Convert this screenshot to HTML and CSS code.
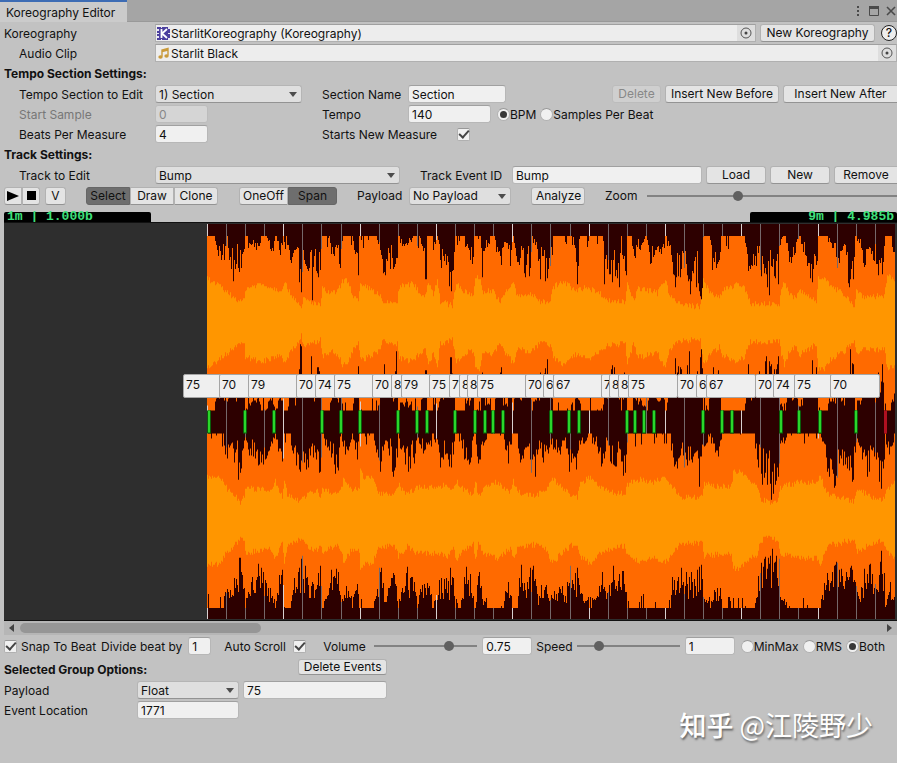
FILE: index.html
```html
<!DOCTYPE html>
<html lang="en">
<head>
  <meta charset="UTF-8" />
  <meta name="viewport" content="width=device-width, initial-scale=1.0"/>
  <title>Koreography Editor</title>
  <link rel="stylesheet" href="styles.css">
</head>
<body>
  <header class="tabbar">
    <div class="tab">Koreography Editor</div>
    <div class="window-icons">
      <svg width="4" height="14" viewBox="0 0 4 14" fill="#4a4a4a"><path d="M1 2h2v2H1zM1 6h2v2H1zM1 10h2v2H1z"/></svg>
      <svg width="10" height="10" viewBox="0 0 10 10"><path d="M.5 .5h9v9h-9z" fill="none" stroke="#4a4a4a"/><path d="M0 0h10v3H0z" fill="#4a4a4a"/></svg>
      <svg width="10" height="10" viewBox="0 0 10 10" stroke="#4a4a4a" stroke-width="1.6"><path d="M1 1l8 8M9 1L1 9"/></svg>
    </div>
  </header>

  <main>
    <div class="row">
      <span class="label">Koreography</span>
      <button class="object-field">
        <svg width="13" height="13" viewBox="0 0 13 13"><path d="M0 0h13v13H0z" fill="#4b3f9e"/><path d="M0 2h2v2H0zM0 6h2v1H0zM0 9h2v2H0zM11 0h2v2h-2zM11 6h2v1h-2zM11 11h2v2h-2zM4 0h1v1H4zM4 12h1v1H4z" fill="#e8e6f4"/><path d="M4.500 2v9M10 2L5 6.500 10 11" fill="none" stroke="#fff" stroke-width="1.800"/></svg>
        <span>StarlitKoreography (Koreography)</span>
        <svg class="picker" width="12" height="12" viewBox="0 0 12 12"><circle cx="6" cy="6" r="5" fill="none" stroke="#555"/><circle cx="6" cy="6" r="1.500" fill="#444"/></svg>
      </button>
      <button class="btn new-koreo">New Koreography</button>
      <button class="help" aria-label="Help">?</button>
    </div>
    <div class="row">
      <span class="label indent">Audio Clip</span>
      <button class="object-field">
        <svg width="13" height="13" viewBox="0 0 13 13"><path d="M5 9.500V3l6-1.500V8.500M5 4.500l6-1.500" fill="none" stroke="#c99a3a" stroke-width="1.400"/><ellipse cx="3.500" cy="10" rx="2.200" ry="1.800" fill="#c99a3a"/><ellipse cx="9.500" cy="9" rx="2.200" ry="1.800" fill="#c99a3a"/></svg>
        <span>Starlit Black</span>
        <svg class="picker" width="12" height="12" viewBox="0 0 12 12"><circle cx="6" cy="6" r="5" fill="none" stroke="#555"/><circle cx="6" cy="6" r="1.500" fill="#444"/></svg>
      </button>
    </div>

    <h2>Tempo Section Settings:</h2>
    <div class="row">
      <label class="label indent" for="tempoSection">Tempo Section to Edit</label>
      <span class="dropdown w-section"><select id="tempoSection"><option>1) Section</option></select></span>
      <label class="label second" for="sectionName">Section Name</label>
      <input class="w-name" type="text" id="sectionName" value="Section">
      <div class="actions">
        <button class="btn w-delete" disabled>Delete</button>
        <button class="btn w-before">Insert New Before</button>
        <button class="btn w-after edge">Insert New After</button>
      </div>
    </div>
    <div class="row">
      <label class="label indent disabled" for="startSample">Start Sample</label>
      <span class="w-section"><input class="w-small" type="text" id="startSample" value="0" disabled></span>
      <label class="label second" for="tempo">Tempo</label>
      <input class="w-tempo" type="text" id="tempo" value="140">
      <div class="radios">
        <label><input type="radio" name="tempoUnit" checked>BPM</label>
        <label><input type="radio" name="tempoUnit">Samples Per Beat</label>
      </div>
    </div>
    <div class="row">
      <label class="label indent" for="beats">Beats Per Measure</label>
      <span class="w-section"><input class="w-small" type="text" id="beats" value="4"></span>
      <label class="label measure" for="newMeasure">Starts New Measure</label>
      <input type="checkbox" id="newMeasure" checked>
    </div>

    <h2>Track Settings:</h2>
    <div class="row">
      <label class="label indent" for="track">Track to Edit</label>
      <span class="dropdown w-track"><select id="track"><option>Bump</option></select></span>
      <label class="label event-id" for="eventId">Track Event ID</label>
      <input class="grow" type="text" id="eventId" value="Bump">
      <div class="track-actions">
        <button class="btn">Load</button>
        <button class="btn">New</button>
        <button class="btn edge">Remove</button>
      </div>
    </div>

    <div class="row toolbar">
      <div class="group transport">
        <button class="btn" aria-label="Play"><svg width="12" height="10" viewBox="0 0 12 10"><path d="M0 0l12 5-12 5z"/></svg></button>
        <button class="btn" aria-label="Stop"><svg width="9" height="9" viewBox="0 0 9 9"><path d="M0 0h9v9H0z"/></svg></button>
      </div>
      <button class="btn w-v">V</button>
      <div class="group modes">
        <button class="btn on">Select</button>
        <button class="btn">Draw</button>
        <button class="btn">Clone</button>
      </div>
      <div class="group kinds">
        <button class="btn">OneOff</button>
        <button class="btn on">Span</button>
      </div>
      <label class="tool-label" for="newPayload">Payload</label>
      <span class="dropdown w-payload"><select id="newPayload"><option>No Payload</option></select></span>
      <button class="btn analyze">Analyze</button>
      <label class="tool-label zoom" for="zoom">Zoom</label>
      <input class="grow" type="range" id="zoom" value="36">
    </div>

    <section class="timeline">
      <div class="counters">
        <span>1m | 1.000b</span>
        <span class="end">9m | 4.985b</span>
      </div>
      <div class="stage">
        <svg id="wave" viewBox="0 0 893 396" preserveAspectRatio="none"></svg>
        <div id="payloads"></div>
      </div>
      <div class="scrollbar">
        <svg width="5" height="8" viewBox="0 0 5 8"><path d="M5 0v8L0 4z" fill="#444"/></svg>
        <div class="scroll-track"><div class="scroll-thumb"></div></div>
        <svg width="5" height="8" viewBox="0 0 5 8"><path d="M0 0v8l5-4z" fill="#444"/></svg>
      </div>
    </section>

    <div class="row playback">
      <input type="checkbox" id="snap" checked>
      <label class="w-snap" for="snap">Snap To Beat</label>
      <label for="divide">Divide beat by</label>
      <input class="w-divide" type="text" id="divide" value="1">
      <label class="auto-scroll" for="autoScroll">Auto Scroll</label>
      <input type="checkbox" id="autoScroll" checked>
      <label class="volume" for="volume">Volume</label>
      <input class="slider" type="range" id="volume" value="75">
      <input class="w-value" type="text" aria-label="Volume value" value="0.75">
      <label for="speed">Speed</label>
      <input class="slider" type="range" id="speed" value="19">
      <input class="w-value" type="text" aria-label="Speed value" value="1">
      <div class="radios">
        <label><input type="radio" name="view">MinMax</label>
        <label><input type="radio" name="view">RMS</label>
        <label><input type="radio" name="view" checked>Both</label>
      </div>
    </div>

    <div class="row group-head">
      <h2>Selected Group Options:</h2>
      <button class="btn delete-events">Delete Events</button>
    </div>
    <div class="row">
      <label class="label narrow" for="payloadType">Payload</label>
      <span class="dropdown w-type"><select id="payloadType"><option>Float</option></select></span>
      <input class="w-float" type="text" aria-label="Payload value" value="75">
    </div>
    <div class="row">
      <label class="label narrow" for="location">Event Location</label>
      <input class="w-type" type="text" id="location" value="1771">
    </div>
  </main>

  <div class="watermark"><b>知乎</b> @江陵野少</div>

  <script src="wave.js"></script>
</body>
</html>
```
FILE: styles.css
```css
* {
  box-sizing: border-box;
}
body {
  margin: 0;
  min-height: 100vh;
  position: relative;
  overflow: hidden;
  background: #c2c2c2;
  color: #111;
  font-family: Inter, "Noto Sans CJK SC", sans-serif;
  font-size: 12px;
}
button, input, select {
  font: inherit;
  color: inherit;
  margin: 0;
}
.tabbar {
  display: flex;
  justify-content: space-between;
  height: 22px;
  background: #a5a5a5;
  border-bottom: 1px solid #999;
}
.tab {
  width: 127px;
  height: 22px;
  padding: 1px 6px 0;
  line-height: 20px;
  background: #cbcbcb;
  border-top: 2px solid #3d6cb4;
  white-space: nowrap;
}
.window-icons {
  display: flex;
  align-items: center;
  gap: 9px;
  padding: 0 1px;
}
.window-icons svg:last-child {
  margin-left: -2px;
}
main {
  padding: 1px 0 0 4px;
}
.row {
  display: flex;
  align-items: center;
  height: 20px;
  white-space: nowrap;
}
.label {
  flex: none;
  width: 151px;
}
.indent {
  padding-left: 15px;
}
.second {
  width: 86px;
}
.measure {
  width: 135px;
}
.narrow {
  width: 133px;
}
.event-id {
  width: 92px;
}
.disabled {
  color: #777;
}
h2 {
  margin: 0;
  height: 20px;
  line-height: 22px;
  font-size: 12px;
  font-weight: 700;
}
h2 + .row {
  margin-top: 1px;
}

/* fields */
input[type="text"] {
  height: 18px;
  padding: 0 3px;
  background: #f0f0f0;
  border: 1px solid #b7b7b7;
  border-top-color: #a0a0a0;
  border-radius: 3px;
}
input[type="text"]:disabled {
  color: #888;
  background: #d5d5d5;
  border-color: #bcbcbc;
}
.object-field {
  flex: 1;
  display: flex;
  align-items: center;
  height: 18px;
  padding: 0 0 0 1px;
  background: #ededed;
  border: 1px solid #b0b0b0;
  border-top-color: #a0a0a0;
  text-align: left;
}
.object-field span {
  flex: 1;
  padding-left: 1px;
}
.object-field .picker {
  width: 18px;
  height: 16px;
  padding: 2px 3px;
  background: #dedede;
}
.dropdown {
  position: relative;
  display: block;
}
.dropdown::after {
  content: "";
  position: absolute;
  right: 5px;
  top: 7px;
  border: 4px solid transparent;
  border-top: 5px solid #4c4c4c;
  border-bottom: 0;
  pointer-events: none;
}
select {
  display: block;
  width: 100%;
  height: 18px;
  padding: 0 3px;
  appearance: none;
  background: #dfdfdf;
  border: 1px solid #b5b5b5;
  border-bottom-color: #939393;
  border-radius: 3px;
}
.btn {
  height: 18px;
  padding: 0 4px;
  background: #e4e4e4;
  border: 1px solid #b2b2b2;
  border-bottom-color: #939393;
  border-radius: 3px;
  line-height: 16px;
  white-space: nowrap;
}
.btn:disabled {
  color: #888;
  background: #cfcfcf;
  border-color: #bcbcbc;
}
.btn.on {
  background: #6e6e6e;
  border-color: #666;
}
.edge {
  border-right: 0;
  border-top-right-radius: 0;
  border-bottom-right-radius: 0;
}
.new-koreo {
  width: 115px;
  margin: 0 6px 0 4px;
}
.help {
  width: 16px;
  height: 16px;
  padding: 0;
  background: #eee;
  border: 1px solid #222;
  border-radius: 50%;
  font-weight: 500;
  line-height: 14px;
}
.w-section {
  width: 147px;
  margin-right: 20px;
}
.w-small {
  width: 53px;
}
.w-name {
  width: 98px;
}
.w-tempo {
  width: 83px;
}
.w-track {
  width: 245px;
  margin-right: 20px;
}
.grow {
  flex: 1;
  min-width: 0;
}
.actions, .track-actions {
  display: flex;
  gap: 4px;
  margin-left: auto;
}
.w-delete {
  width: 49px;
}
.w-before, .w-after {
  width: 114px;
}
.track-actions {
  margin-left: 4px;
}
.track-actions .btn {
  width: 60px;
}
.track-actions .edge {
  width: 63px;
}

/* toggles */
input[type="checkbox"], input[type="radio"] {
  flex: none;
  display: grid;
  place-items: center;
  width: 13px;
  height: 13px;
  appearance: none;
  background: #f0f0f0;
  border: 1px solid #b0b0b0;
  border-top-color: #989898;
  border-radius: 2px;
}
input[type="checkbox"]:checked::before {
  content: "";
  width: 8px;
  height: 4px;
  margin-bottom: 3px;
  border: solid #444;
  border-width: 0 0 2px 2px;
  transform: rotate(-48deg);
}
input[type="radio"] {
  border-radius: 50%;
}
input[type="radio"]:checked::before {
  content: "";
  width: 7px;
  height: 7px;
  background: #383838;
  border-radius: 50%;
}
.radios {
  display: flex;
  gap: 4px;
  margin-left: 6px;
}
.radios label {
  display: flex;
  align-items: center;
}
input[type="range"] {
  height: 12px;
  appearance: none;
  background: linear-gradient(#828282, #828282) center / 100% 2px no-repeat;
}
input[type="range"]::-webkit-slider-thumb {
  appearance: none;
  width: 10px;
  height: 10px;
  background: #606060;
  border-radius: 50%;
}

/* toolbar */
.toolbar {
  height: 21px;
}
.group {
  display: flex;
}
.group .btn {
  padding: 0;
  border-radius: 0;
}
.group .btn:first-child {
  border-radius: 3px 0 0 3px;
}
.group .btn:last-child {
  border-radius: 0 3px 3px 0;
}
.transport .btn {
  display: grid;
  place-items: center;
  width: 18px;
}
.w-v {
  width: 21px;
  margin: 0 20px 0 5px;
}
.modes .btn {
  width: 44px;
}
.modes {
  margin-right: 21px;
}
.kinds .btn {
  width: 49px;
}
.tool-label {
  width: 52px;
  margin-left: 20px;
}
.w-payload {
  width: 102px;
  margin-right: 20px;
}
.analyze {
  width: 54px;
}
.zoom {
  width: 42px;
}

/* timeline */
.timeline {
  margin-top: 6px;
}
.counters {
  display: flex;
  justify-content: space-between;
}
.counters span {
  width: 147px;
  height: 10px;
  padding: 0 3px;
  background: #000;
  color: #3fe07c;
  border-radius: 2px 2px 0 0;
  font: bold 13px/10px "Liberation Mono", monospace;
}
.counters .end {
  text-align: right;
}
.stage {
  position: relative;
  background: #2e2e2e;
  border: solid #111;
  border-width: 1px 0;
}
#wave {
  display: block;
  width: 100%;
  height: 397px;
}
.payload {
  position: absolute;
  top: 151px;
  width: 50px;
  height: 24px;
  padding: 0 2px;
  background: #efefef;
  border: 1px solid #a5a5a5;
  border-radius: 2px;
  line-height: 19px;
}
.scrollbar {
  display: flex;
  align-items: center;
  height: 14px;
  padding: 0 5px;
  background: #b6b6b6;
}
.scroll-track {
  flex: 1;
  margin: 0 6px;
}
.scroll-thumb {
  width: 28%;
  height: 10px;
  background: #969696;
  border-radius: 5px;
}

/* bottom */
.playback {
  height: 22px;
}
.w-snap {
  width: 80px;
  margin-left: 4px;
}
.playback > label {
  flex: none;
}
.w-divide {
  width: 23px;
  margin-left: 6px;
}
.auto-scroll {
  width: 69px;
  margin-left: 13px;
}
.volume {
  width: 51px;
  margin-left: 17px;
}
.slider {
  width: 103px;
}
.w-value {
  width: 50px;
  margin: 0 4px 0 5px;
}
.playback .radios {
  margin-left: 2px;
}
#speed {
  margin-left: 4px;
}
.group-head {
  height: 23px;
}
.delete-events {
  width: 89px;
  height: 16px;
  margin-left: 151px;
  margin-bottom: 4px;
  line-height: 14px;
}
.w-type {
  width: 102px;
}
.w-float {
  width: 144px;
  margin-left: 4px;
}
.watermark {
  position: absolute;
  right: 24px;
  bottom: 20px;
  color: #fff;
  font-family: "Noto Sans CJK SC", sans-serif;
  font-size: 27px;
  line-height: 36px;
  text-shadow: 1px 2px 2px #666;
}
.watermark b {
  font-weight: 500;
}
```
FILE: wave.js
```js
// Envelopes as x,value pairs. peak = px missing from full height, rms = half height
const channels = [
  {
    center: 99.5,
    peak: [0,0,4,2,8,4,11,15,15,22,18,15,20,2,22,18,26,34,28,24,32,30,37,28,38,2,45,6,52,10,55,0,60,4,65,15,68,0,73,12,77,0,81,4,83,22,88,16,91,28,94,60,96,22,103,28,105,50,107,26,111,38,114,40,115,0,122,0,125,18,130,10,133,28,135,4,145,2,147,22,151,34,152,0,160,2,171,4,173,12,175,42,180,22,187,30,189,42,191,0,195,8,213,0,
      216,18,219,40,220,0,225,2,226,16,230,0,232,9,235,39,238,19,241,32,243,51,246,40,248,0,256,2,261,10,265,29,267,0,273,0,275,32,278,9,286,0,291,16,294,39,296,9,300,4,303,22,306,0,310,22,316,26,323,34,325,2,330,12,333,34,336,22,340,44,341,26,345,15,346,0,365,4,367,0,370,36,372,4,386,2,396,4,397,39,400,22,405,36,410,29,412,39,414,2,416,32,419,41,420,0,425,0,426,29,430,9,440,2,443,29,446,19,450,6,
      452,9,455,29,458,0,462,12,465,22,468,42,472,34,478,26,483,46,487,32,490,49,493,59,495,56,496,0,502,2,505,32,512,31,514,2,533,0,538,4,541,36,547,22,553,32,562,46,567,29,571,47,573,6,578,2,582,29,590,9,592,0,597,16,602,26,604,39,609,32,611,0,618,0,623,7,627,12,630,29,635,9,639,16,642,42,647,51,648,2,653,7,658,29,663,12,668,19,672,32,675,39,677,0,684,0,686,12],
    rms: [0,45,10,39,18,33,26,27,33,22,37,24,38,35,53,40,63,37,73,33,77,42,83,30,90,23,94,13,96,25,113,18,115,35,123,30,131,33,135,43,140,43,146,28,151,22,153,38,163,35,173,28,175,20,190,22,192,37,206,40,213,30,218,28,221,43,226,30,230,45,233,22,245,18,249,42,255,33,266,28,268,47,272,47,275,32,286,33,293,20,296,28,306,42,310,27,323,30,333,22,343,23,346,37,356,42,368,33,380,37,396,28,400,23,418,22,420,43,426,23,431,35,443,33,450,30,
      453,37,458,45,462,30,470,20,493,17,496,43,502,33,512,25,515,33,530,40,537,35,543,20,572,20,574,32,577,43,582,30,588,25,592,33,605,25,609,22,611,47,617,47,623,37,637,30,647,18,649,33,657,27,677,28,680,47,685,45]
  },
  {
    center: 296.5,
    peak: [0,0,16,2,19,23,21,13,25,7,27,27,30,30,33,56,36,35,38,0,43,20,48,17,51,32,56,23,61,17,65,7,68,3,75,37,77,3,83,3,88,30,91,43,94,47,98,30,103,20,110,17,113,40,115,2,121,10,125,33,131,27,134,0,138,17,145,3,150,27,152,0,166,2,170,17,172,32,175,27,178,7,183,17,186,33,190,17,191,2,198,27,203,27,208,23,210,3,
      213,10,221,23,225,3,230,7,233,27,238,17,241,27,245,33,248,0,253,3,258,30,263,23,266,7,268,0,272,35,275,7,283,2,296,0,301,27,305,3,310,3,313,33,318,13,323,30,328,30,331,10,338,27,343,7,353,17,358,7,363,37,370,30,373,10,383,2,390,10,396,30,400,7,406,30,413,23,418,33,420,2,426,0,443,2,453,3,
      463,3,465,23,470,27,477,33,485,23,492,38,495,30,497,10,503,3,512,20,515,3,547,2,550,23,555,37,565,53,572,40,573,7,583,2,613,2,617,17,620,27,625,43,632,30,637,27,645,43,649,17,652,10,657,30,663,37,668,17,673,47,677,30,678,3,683,17,687,3],
    rms: [0,45,13,45,18,34,25,29,33,19,37,24,38,34,50,32,63,30,68,40,75,24,77,42,80,27,93,20,101,29,110,30,113,24,115,32,130,27,134,32,136,42,143,32,152,32,153,52,156,44,165,44,171,29,186,25,191,37,200,27,210,34,213,34,230,34,240,37,246,30,249,40,256,32,266,25,268,42,271,24,276,34,290,39,303,29,306,40,310,29,326,25,338,30,345,44,353,35,363,27,370,24,373,37,383,45,393,34,406,29,418,27,420,37,433,42,446,39,
      458,44,467,32,473,24,495,24,497,37,510,35,524,35,526,49,533,49,542,40,550,35,553,22,560,19,570,20,573,34,590,39,610,39,613,45,620,27,647,20,650,32,663,25,675,20,678,27,685,39,687,40]
  }
];

// [x, payload] for every event on the track
const events = [
  [204, 75], [240, 70], [269, 79], [317, 70], [336, 74], [355, 75], [393, 70], [412, 8],
  [422, 79], [450, 75], [470, 7], [480, 8], [488, 8], [498, 75], [546, 70], [564, 6],
  [574, 67], [622, 7], [630, 8], [639, 8], [649, 75], [698, 70], [717, 6], [727, 67],
  [776, 70], [794, 74], [815, 75], [851, 70]
];

const viewWidth = 893;
const start = 203;
const length = 688;
const full = 87;

let seed = 7;
function rand() {
  seed = (seed * 16807) % 2147483647;
  return seed / 2147483647;
}

function sample(points, x) {
  let i = 0;
  while (i < points.length - 4 && points[i + 2] <= x) i += 2;
  const t = Math.min(1, (x - points[i]) / (points[i + 2] - points[i]));
  return points[i + 1] + (points[i + 3] - points[i + 1]) * t;
}

// top and bottom halves get their own noise
function bars(center, heightAt) {
  let d = "";
  for (let x = 0; x < length; x++) {
    const top = Math.round(center - heightAt(x));
    const bottom = Math.round(center + heightAt(x));
    d += `M${start + x} ${top}h1V${bottom}h-1z`;
  }
  return d;
}

let svg = `<rect x="${start}" y="1" width="${length}" height="394" fill="#2d0000"/>`;
for (let beat = 0; beat < 36; beat++) {
  const x = Math.round(start + beat * 19.08);
  svg += `<rect x="${x}" y="1" width="1" height="394" fill="${beat % 4 ? "#75686a" : "#d8d0d0"}"/>`;
}
channels.forEach(ch => {
  const peak = bars(ch.center, x => {
    const d = sample(ch.peak, x);
    if (d < 4) return rand() > 0.85 ? full - rand() * 14 : full;
    return full - Math.min(66, d * (0.25 + rand() * 1.05) + rand() * 6);
  });
  const rms = bars(ch.center, x => sample(ch.rms, x) - 4 + rand() * 6);
  svg += `<path d="${peak}" fill="#ff6a00"/><path d="${rms}" fill="#ff9600"/>`;
});
events.forEach(([x]) => {
  svg += `<rect x="${x - 1}" y="187" width="4" height="23" fill="#0a5d0a"/><rect x="${x}" y="187" width="2" height="22" fill="#2bd52b"/>`;
});
svg += `<rect x="880" y="187" width="3" height="23" fill="#b01020"/>`;
document.getElementById("wave").innerHTML = svg;

document.getElementById("payloads").innerHTML = events.map(([x, value]) =>
  `<span class="payload" style="left:${(x - 25) / viewWidth * 100}%">${value}</span>`
).join("");
```
